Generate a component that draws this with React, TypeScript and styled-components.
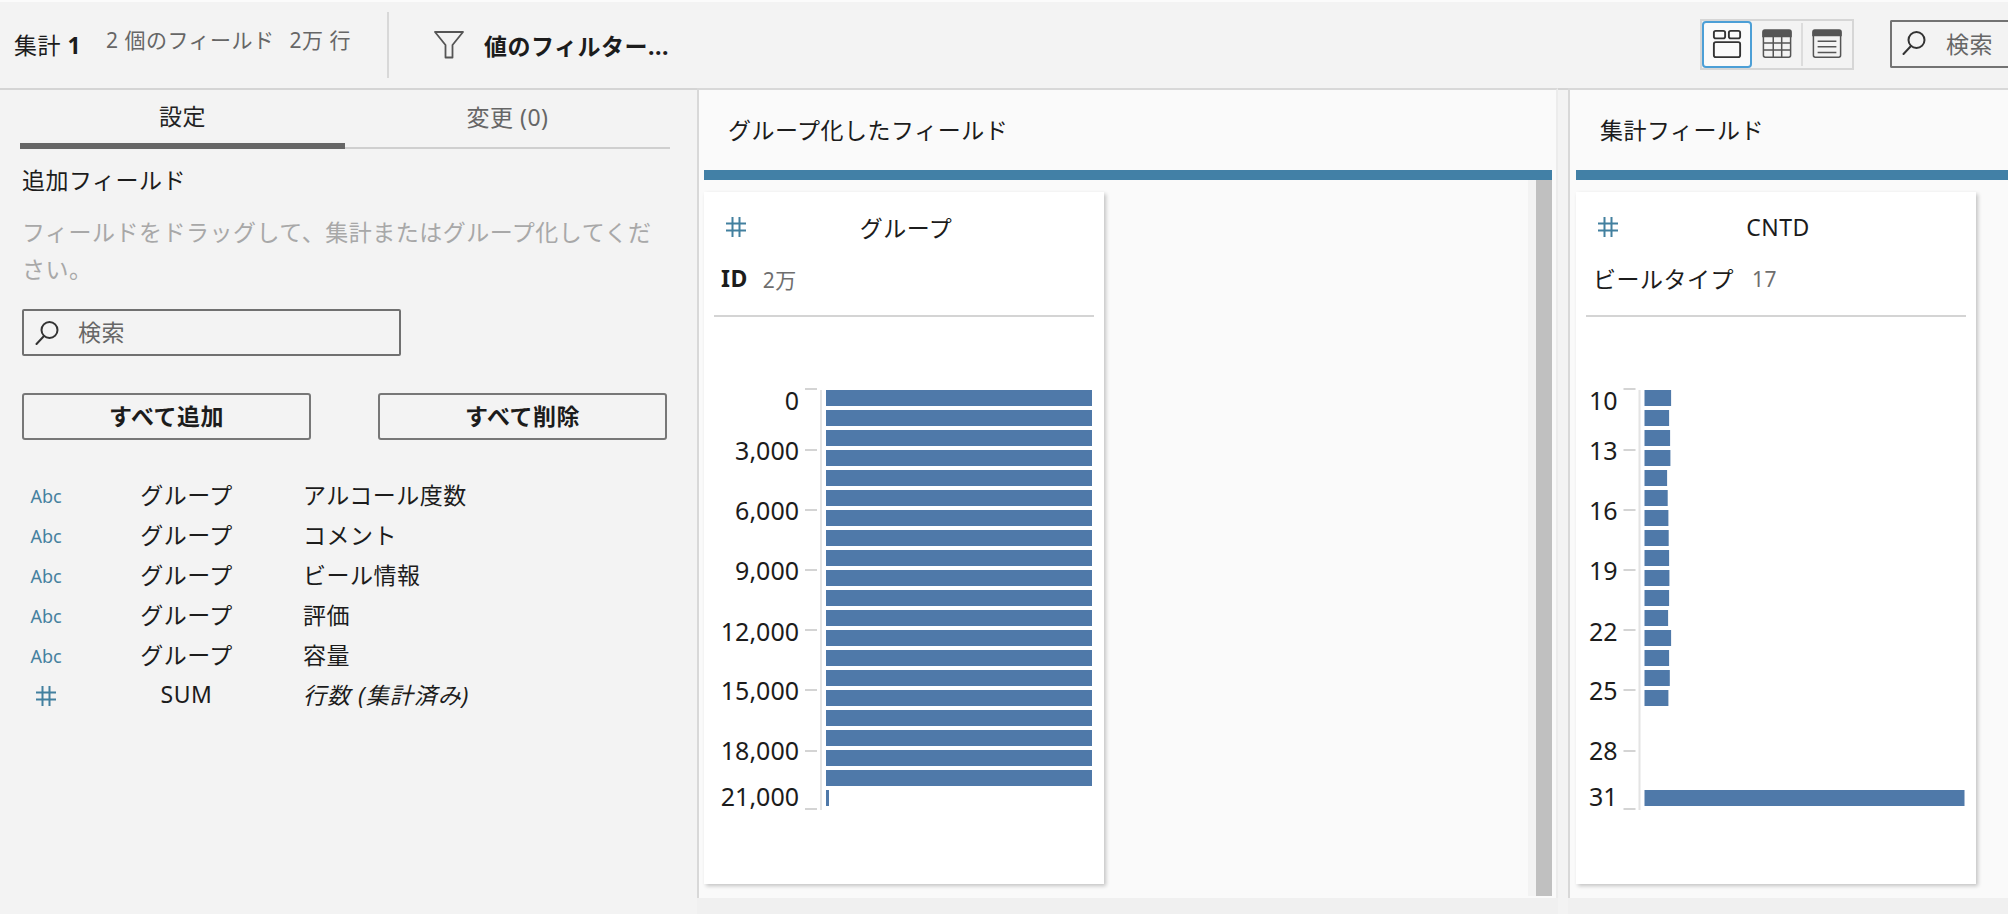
import React from "react";
import styled, { createGlobalStyle } from "styled-components";

const Global = createGlobalStyle`
  html, body { margin: 0; padding: 0; background: #f3f3f3; }
  * { box-sizing: border-box; }
  body { font-family: "Noto Sans", "Noto Sans CJK JP", sans-serif; color: #1c1c1c; font-size: 23px; font-weight: 400; letter-spacing: 0.5px; }
`;

const Page = styled.div`
  width: 2008px; height: 914px; overflow: hidden; display: flex; flex-direction: column; background: #f3f3f3;
`;
const Toolbar = styled.header`
  height: 90px; flex: none; display: flex; align-items: center; padding-left: 14px;
  border-top: 2px solid #fbfbfb; border-bottom: 2px solid #d4d4d4; background: #f3f3f3;
`;
const Title = styled.div`
  width: 92px; font-size: 23px; line-height: 32px; b { font-weight: 700; }
`;
const Meta = styled.div`
  width: 281px; display: flex; gap: 15px; font-size: 21px; color: #666; margin-top: -10px; line-height: 30px; span { white-space: pre; }
`;
const VDivider = styled.div`
  width: 2px; height: 66px; background: #d8d8d8; margin-right: 45px;
`;
const FilterLabel = styled.div`
  font-weight: 700; font-size: 23px; margin-left: 20px; white-space: nowrap;
`;
const Spacer = styled.div` flex: 1; `;
const Switch = styled.div`
  display: flex; width: 154px; height: 51px; padding: 2px 2px 2px 0; background: #f3f3f3; border: 2px solid #d6d6d6; margin-top: -2px; margin-right: 36px; flex: none;
`;
const SwitchBtn = styled.div<{ $active?: boolean; $w: number }>`
  width: ${p => p.$w}px; display: flex; align-items: center; justify-content: center; margin: ${p => (p.$active ? "-2px 0" : "0")};
  border: ${p => (p.$active ? "2px solid #4c9fd6" : "0")}; border-radius: 4px; background: ${p => (p.$active ? "#fafafa" : "transparent")};
`;
const SwitchSep = styled.div` width: 2px; background: #dcdcdc; `;
const TopSearch = styled.div`
  width: 118px; height: 48px; flex: none; margin-top: -2px; border: 2px solid #737373; border-right: 0; display: flex; align-items: center; padding: 0 0 2px 10px; gap: 20px; color: #666; border-radius: 2px 0 0 2px;
`;
const Main = styled.div` flex: 1; display: flex; min-height: 0; `;
const Side = styled.aside`
  width: 697px; flex: none; padding: 0 27px 0 20px; background: #f3f3f3;
`;
const Tabs = styled.div` display: flex; height: 59px; `;
const Tab = styled.div<{ $active?: boolean }>`
  flex: 1; display: flex; align-items: center; justify-content: center; padding-bottom: ${p => (p.$active ? 4 : 6)}px;
  color: ${p => (p.$active ? "#222" : "#666")};
  border-bottom: ${p => (p.$active ? "6px solid #666" : "2px solid #cfcfcf")};
`;
const SideBody = styled.div` padding-left: 2px; `;
const Heading = styled.div` margin-top: 13px; line-height: 37px; `;
const Hint = styled.div` margin-top: 15px; line-height: 37px; color: #a8a8a8; width: 645px; `;
const SideSearch = styled.div`
  margin-top: 21px; width: 379px; height: 47px; border: 2px solid #707070; border-radius: 2px; display: flex; align-items: center; padding: 0 0 4px 11px; gap: 19px; color: #666;
  svg { margin-top: 4px; }
`;
const Buttons = styled.div` margin-top: 37px; display: flex; justify-content: space-between; width: 645px; `;
const Button = styled.div`
  width: 289px; height: 47px; padding-bottom: 4px; border: 2px solid #777; border-radius: 3px; display: flex; align-items: center; justify-content: center; font-weight: 700;
`;
const FieldList = styled.div` margin-top: 36px; `;
const FieldRow = styled.div`
  display: grid; grid-template-columns: 48px 233px 1fr; height: 40px; align-items: center;
`;
const TypeCell = styled.div`
  color: #45819f; font-size: 18px; display: flex; justify-content: center; letter-spacing: 0;
`;
const AggCell = styled.div` text-align: center; padding-bottom: 4px; white-space: nowrap; `;
const NameCell = styled.div<{ $italic?: boolean }>`
  font-style: ${p => (p.$italic ? "italic" : "normal")}; letter-spacing: ${p => (p.$italic ? 1 : 0.5)}px; white-space: nowrap; padding-bottom: 4px;
`;
const Panel = styled.section<{ $last?: boolean }>`
  width: ${p => (p.$last ? "440px" : "861px")}; flex: none; background: #f0f0f0; margin-right: ${p => (p.$last ? 0 : 10)}px; margin-top: -2px;
`;
const PanelInner = styled.div<{ $last?: boolean }>`
  height: 810px; background: #fafafa; border-left: 2px solid #d8d8d8; border-top: 2px solid #d8d8d8;
  border-right: ${p => (p.$last ? "0" : "2px solid #ececec")};
  padding-left: ${p => (p.$last ? 6 : 5)}px; padding-right: ${p => (p.$last ? 0 : 4)}px; display: flex; flex-direction: column;
`;
const PanelHead = styled.div<{ $x: number }>`
  height: 80px; flex: none; display: flex; align-items: center; padding: 0 0 2px ${p => p.$x}px;
`;
const Bar = styled.div` height: 10px; flex: none; background: #4280a6; `;
const PanelBody = styled.div` flex: 1; display: flex; min-height: 0; padding-bottom: 2px; `;
const Card = styled.div`
  width: 400px; height: 692px; margin-top: 12px; flex: none; background: #fff; box-shadow: 2px 2px 4px rgba(0,0,0,.22);
`;
const CardHead = styled.div`
  height: 70px; display: grid; grid-template-columns: 1fr auto 1fr; align-items: center; padding: 0 18px 0 22px;
`;
const CardIcon = styled.div` display: flex; `;
const CardStats = styled.div`
  height: 34px; display: flex; align-items: center; padding-left: 17px; gap: 18px;
`;
const StatName = styled.span<{ $bold?: boolean }>`
  font-weight: ${p => (p.$bold ? 700 : 400)}; margin-right: ${p => (p.$bold ? -3 : 0)}px; padding-bottom: 2px;
`;
const StatValue = styled.span` font-size: 21px; color: #6e6e6e; `;
const CardRule = styled.div` height: 2px; margin: 19px 10px 0; background: #d4d4d4; `;
const ChartSvg = styled.svg` display: block; `;
const TickLabel = styled.text`
  font-family: "Noto Sans", sans-serif; font-size: 25px; fill: #1c1c1c; text-anchor: end; letter-spacing: 0;
`;
const ScrollTrack = styled.div` width: 8px; flex: none; background: #f3f3f3; margin-left: auto; `;
const ScrollThumb = styled.div` width: 16px; flex: none; background: #c0c0c0; `;

const Search = ({ size = 24 }: { size?: number }) => (
  <svg width={size} height={size} viewBox="0 0 24 24" fill="none" stroke="#333" strokeWidth="2">
    <circle cx="14.5" cy="9" r="8" />
    <path d="M9 15 L1.5 23" strokeLinecap="round" />
  </svg>
);
const Funnel = () => (
  <svg width="30" height="28" viewBox="0 0 30 28" fill="none" stroke="#555" strokeWidth="1.8" strokeLinejoin="round">
    <path d="M1 1 H29 L18.5 14 V26.5 H11.5 V14 Z" />
  </svg>
);
const Hash = () => (
  <svg width="20" height="20" viewBox="0 0 20 20" stroke="#42809f" strokeWidth="2" fill="none">
    <path d="M6.5 0 V20 M13.5 0 V20 M0 6.5 H20 M0 13.5 H20" />
  </svg>
);
const CardsIcon = () => (
  <svg width="30" height="30" viewBox="0 0 32 32" fill="none" stroke="#333" strokeWidth="2">
    <rect x="2" y="2" width="12" height="8" rx="2" />
    <rect x="18" y="2" width="12" height="8" rx="2" />
    <rect x="2" y="14" width="28" height="16" rx="2" />
  </svg>
);
const TableIcon = () => (
  <svg width="30" height="30" viewBox="0 0 32 32" fill="none" stroke="#555" strokeWidth="1.6">
    <path d="M3 1 H29 A2 2 0 0 1 31 3 V8 H1 V3 A2 2 0 0 1 3 1 Z" fill="#555" />
    <rect x="1.5" y="2" width="29" height="28" rx="2" />
    <path d="M1.5 15 H30.5 M1.5 22.5 H30.5 M12 8 V30 M21 8 V30" />
  </svg>
);
const ListIcon = () => (
  <svg width="30" height="30" viewBox="0 0 32 32" fill="none" stroke="#555" strokeWidth="1.6">
    <path d="M3 1 H29 A2 2 0 0 1 31 3 V7 H1 V3 A2 2 0 0 1 3 1 Z" fill="#555" />
    <rect x="1.5" y="2" width="29" height="28" rx="2" />
    <path d="M6 13 H26 M6 19 H26 M6 25 H26" />
  </svg>
);

const ticksY = [389, 450, 510, 570, 630, 690, 751, 809];
const labelCy = [401, 451, 511, 571, 632, 691, 751, 797];

type ChartProps = { axisX: number; labels: string[]; bars: { y: number; w: number }[] };
const Chart = ({ axisX, labels, bars }: ChartProps) => (
  <ChartSvg width="400" height="500" viewBox="0 317 400 500" preserveAspectRatio="xMinYMin meet">
    {labels.map((l, i) => (
      <TickLabel key={l} x={axisX - 21} y={labelCy[i] + 9}>{l}</TickLabel>
    ))}
    {ticksY.map(y => (
      <rect key={y} x={axisX - 15} y={y - 1} width="12" height="2" fill="#d4d4d4" />
    ))}
    <rect x={axisX} y="390" width="2" height="420" fill="#e4e4e4" />
    {bars.map((b, i) => (
      <rect key={i} x={axisX + 6} y={b.y} width={b.w} height="16" fill="#4f79a9" />
    ))}
  </ChartSvg>
);

const bars1 = [
  ...Array.from({ length: 20 }, (_, i) => ({ y: 390 + i * 20, w: 266 })),
  { y: 790, w: 3 },
];
const widths2 = [26.6, 24.6, 25.6, 25.9, 22.6, 23.2, 23.9, 24.2, 24.6, 24.9, 24.6, 23.6, 26.6, 24.6, 25.3, 23.9];
const bars2 = [...widths2.map((w, i) => ({ y: 390 + i * 20, w })), { y: 790, w: 320 }];

const fields = ["アルコール度数", "コメント", "ビール情報", "評価", "容量"];

export default function App() {
  return (
    <Page>
      <Global />
      <Toolbar>
        <Title>集計 <b>1</b></Title>
        <Meta><span>2 個のフィールド</span><span>2万 行</span></Meta>
        <VDivider />
        <Funnel />
        <FilterLabel>値のフィルター...</FilterLabel>
        <Spacer />
        <Switch>
          <SwitchBtn $active $w={50}><CardsIcon /></SwitchBtn>
          <SwitchBtn $w={49}><TableIcon /></SwitchBtn>
          <SwitchSep />
          <SwitchBtn $w={47}><ListIcon /></SwitchBtn>
        </Switch>
        <TopSearch><Search />検索</TopSearch>
      </Toolbar>
      <Main>
        <Side>
          <Tabs>
            <Tab $active>設定</Tab>
            <Tab>変更 (0)</Tab>
          </Tabs>
          <SideBody>
            <Heading>追加フィールド</Heading>
            <Hint>フィールドをドラッグして、集計またはグループ化してください。</Hint>
            <SideSearch><Search />検索</SideSearch>
            <Buttons>
              <Button>すべて追加</Button>
              <Button>すべて削除</Button>
            </Buttons>
            <FieldList>
              {fields.map(f => (
                <FieldRow key={f}>
                  <TypeCell>Abc</TypeCell>
                  <AggCell>グループ</AggCell>
                  <NameCell>{f}</NameCell>
                </FieldRow>
              ))}
              <FieldRow>
                <TypeCell><Hash /></TypeCell>
                <AggCell>SUM</AggCell>
                <NameCell $italic>行数 (集計済み)</NameCell>
              </FieldRow>
            </FieldList>
          </SideBody>
        </Side>
        <Panel>
          <PanelInner>
            <PanelHead $x={24}>グループ化したフィールド</PanelHead>
            <Bar />
            <PanelBody>
              <Card>
                <CardHead>
                  <CardIcon><Hash /></CardIcon>
                  <span>グループ</span>
                  <span />
                </CardHead>
                <CardStats><StatName $bold>ID</StatName><StatValue>2万</StatValue></CardStats>
                <CardRule />
                <Chart axisX={116} bars={bars1} labels={["0", "3,000", "6,000", "9,000", "12,000", "15,000", "18,000", "21,000"]} />
              </Card>
              <ScrollTrack />
              <ScrollThumb />
            </PanelBody>
          </PanelInner>
        </Panel>
        <Panel $last>
          <PanelInner $last>
            <PanelHead $x={24}>集計フィールド</PanelHead>
            <Bar />
            <PanelBody>
              <Card>
                <CardHead>
                  <CardIcon><Hash /></CardIcon>
                  <span>CNTD</span>
                  <span />
                </CardHead>
                <CardStats><StatName>ビールタイプ</StatName><StatValue>17</StatValue></CardStats>
                <CardRule />
                <Chart axisX={62.5} bars={bars2} labels={["10", "13", "16", "19", "22", "25", "28", "31"]} />
              </Card>
            </PanelBody>
          </PanelInner>
        </Panel>
      </Main>
    </Page>
  );
}
